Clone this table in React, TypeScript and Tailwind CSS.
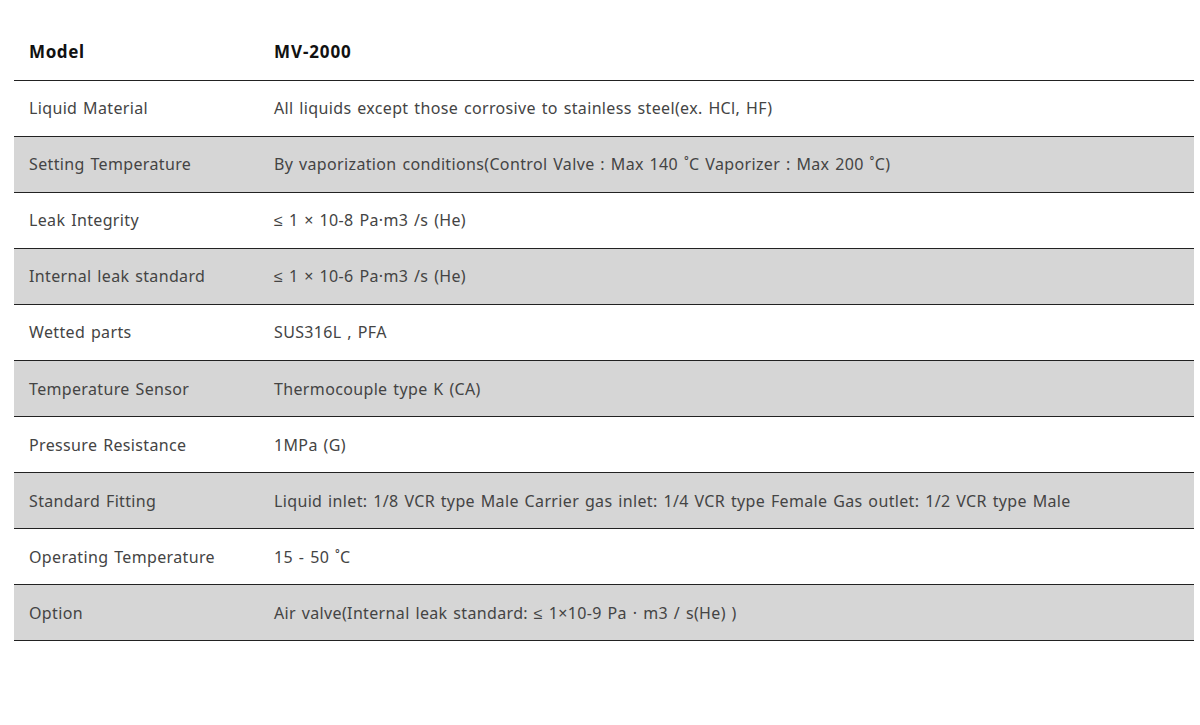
const rows: [string, string][] = [
  ["Liquid Material", "All liquids except those corrosive to stainless steel(ex. HCl, HF)"],
  ["Setting Temperature", "By vaporization conditions(Control Valve : Max 140 ˚C Vaporizer : Max 200 ˚C)"],
  ["Leak Integrity", "≤ 1 × 10-8 Pa·m3 /s (He)"],
  ["Internal leak standard", "≤ 1 × 10-6 Pa·m3 /s (He)"],
  ["Wetted parts", "SUS316L , PFA"],
  ["Temperature Sensor", "Thermocouple type K (CA)"],
  ["Pressure Resistance", "1MPa (G)"],
  ["Standard Fitting", "Liquid inlet: 1/8 VCR type Male Carrier gas inlet: 1/4 VCR type Female Gas outlet: 1/2 VCR type Male"],
  ["Operating Temperature", "15 - 50 ˚C"],
  ["Option", "Air valve(Internal leak standard: ≤ 1×10-9 Pa · m3 / s(He) )"],
];

export default function App() {
  return (
    <div className="min-h-[725px] bg-white pt-6 pl-[14px] pr-[6px] font-['Noto_Sans',sans-serif]">
      <table className="w-full border-collapse text-left">
        <thead>
          <tr className="h-[56px] border-b border-[#222]">
            <th className="w-[245px] px-[15px] text-[17px] font-bold tracking-[0.6px] text-[#111]">Model</th>
            <th className="px-[15px] text-[17px] font-bold tracking-[0.9px] text-[#111]">MV-2000</th>
          </tr>
        </thead>
        <tbody>
          {rows.map(([k, v], i) => (
            <tr
              key={k}
              className={`h-[56.1px] border-b border-[#222] ${i % 2 === 1 ? "bg-[#d6d6d6]" : "bg-white"}`}
            >
              <td className="px-[15px] text-[16px] tracking-[0.35px] [word-spacing:1.3px] text-[#444]">{k}</td>
              <td className="px-[15px] text-[16px] tracking-[0.35px] [word-spacing:1.3px] text-[#444]">{v}</td>
            </tr>
          ))}
        </tbody>
      </table>
    </div>
  );
}
